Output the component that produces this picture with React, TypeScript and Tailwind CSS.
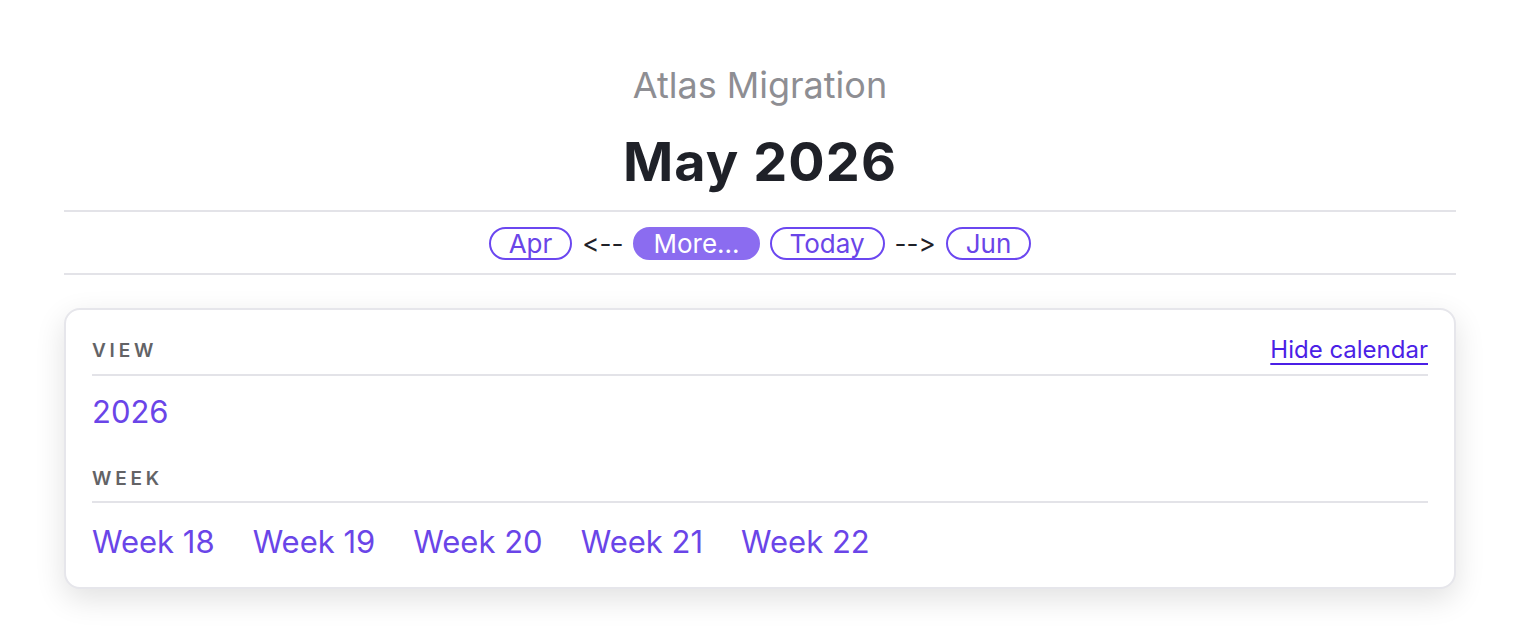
import React from "react";

export default function App() {
  const weeks = ["Week 18", "Week 19", "Week 20", "Week 21", "Week 22"];
  return (
    <div
      className="min-h-[644px] w-[1520px] bg-white px-16 pt-[62px] [font-feature-settings:'calt'_0,'liga'_0]"
      style={{ fontFamily: "Inter, 'Noto Sans', sans-serif" }}
    >
      <div className="text-center text-[36px] leading-[46px] text-[#8e8e93]">Atlas Migration</div>
      <div className="mt-[22px] text-center text-[54px] font-bold leading-[64px] tracking-[0.02em] text-[#1f2128]">May 2026</div>
      <div className="mt-[16px] flex items-center justify-center gap-[10px] border-y-2 border-[#e3e3e8] pb-[13px] pt-[15px]">
        <button className="rounded-full border-2 border-[#6b47f0] px-[18px] text-[26px] leading-[29px] text-[#6a45e8]">Apr</button>
        <span className="text-[26px] leading-[29px] text-[#1f2128]">&lt;--</span>
        <button className="rounded-full border-2 border-[#8b6cf0] bg-[#8b6cf0] px-[18px] text-[26px] leading-[29px] text-white">More...</button>
        <button className="rounded-full border-2 border-[#6b47f0] px-[18px] text-[26px] leading-[29px] text-[#6a45e8]">Today</button>
        <span className="text-[26px] leading-[29px] text-[#1f2128]">--&gt;</span>
        <button className="rounded-full border-2 border-[#6b47f0] px-[18px] text-[26px] leading-[29px] text-[#6a45e8]">Jun</button>
      </div>
      <div className="mt-[33px] rounded-[16px] border-2 border-[#e6e6eb] bg-white px-[26px] pb-[27px] pt-[27px] shadow-[0_10px_30px_rgba(0,0,0,0.12)]">
        <div className="flex items-end justify-between border-b-2 border-[#e3e3e8] pb-[11px]">
          <span className="text-[19px] font-semibold leading-[24px] tracking-[0.2em] text-[#636366]">VIEW</span>
          <a href="#" className="text-[24px] leading-[26px] text-[#4b1fe6] underline underline-offset-[5px]">Hide calendar</a>
        </div>
        <div className="mt-[18px] text-[31px] leading-[36px] text-[#6a45e8]">2026</div>
        <div className="mt-[37px] border-b-2 border-[#e3e3e8] pb-[10px]">
          <span className="text-[19px] font-semibold leading-[24px] tracking-[0.2em] text-[#636366]">WEEK</span>
        </div>
        <div className="mt-[21px] flex gap-[38px]">
          {weeks.map((w) => (
            <a key={w} href="#" className="text-[31px] leading-[36px] text-[#6a45e8]">{w}</a>
          ))}
        </div>
      </div>
    </div>
  );
}
